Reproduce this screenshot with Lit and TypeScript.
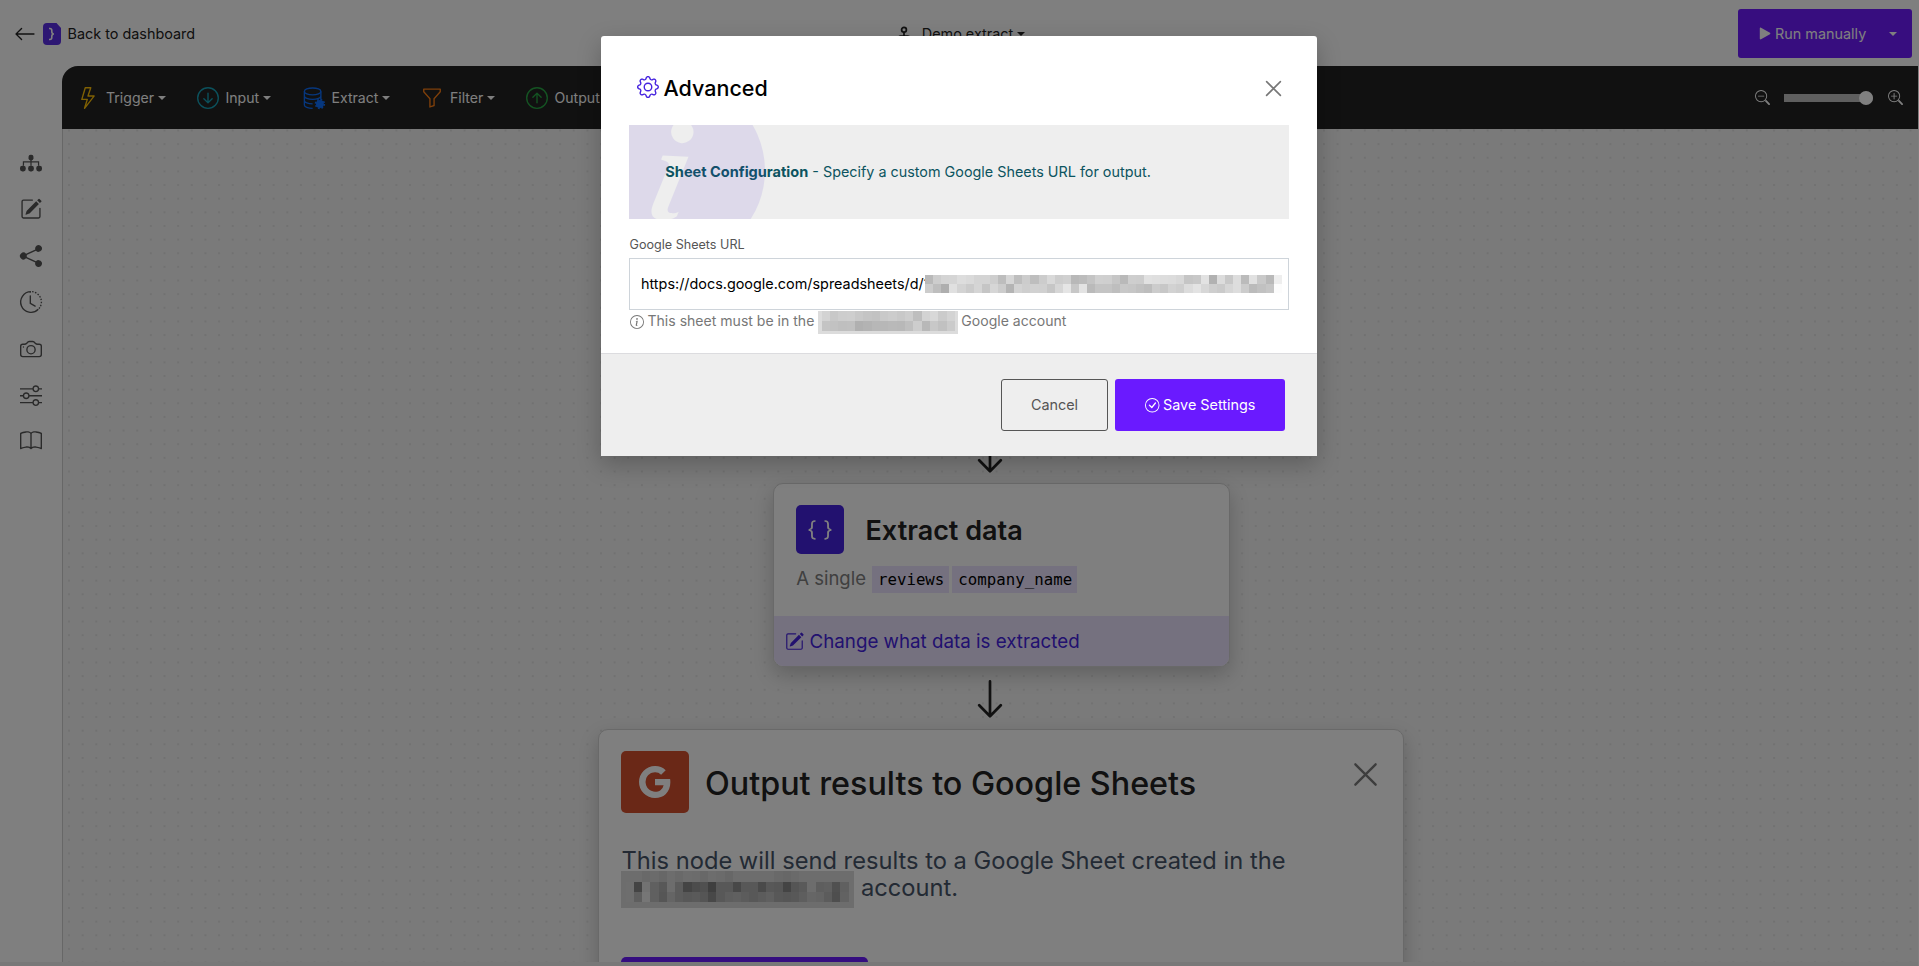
import { LitElement, html, css, svg } from "lit";
import { customElement, property } from "lit/decorators.js";

const PENCIL = svg`<path d="M15.502 1.94a.5.5 0 0 1 0 .706L14.459 3.69l-2-2L13.502.646a.5.5 0 0 1 .707 0l1.293 1.293zm-1.75 2.456-2-2L4.939 9.21a.5.5 0 0 0-.121.196l-.805 2.414a.25.25 0 0 0 .316.316l2.414-.805a.5.5 0 0 0 .196-.12l6.813-6.814z"/><path fill-rule="evenodd" d="M1 13.5A1.5 1.5 0 0 0 2.5 15h11a1.5 1.5 0 0 0 1.5-1.5v-6a.5.5 0 0 0-1 0v6a.5.5 0 0 1-.5.5h-11a.5.5 0 0 1-.5-.5v-11a.5.5 0 0 1 .5-.5H9a.5.5 0 0 0 0-1H2.5A1.5 1.5 0 0 0 1 2.5z"/>`;
const RING = svg`<path d="M8 15A7 7 0 1 1 8 1a7 7 0 0 1 0 14m0 1A8 8 0 1 0 8 0a8 8 0 0 0 0 16"/>`;
const LENS = svg`<path fill-rule="evenodd" d="M6.5 12a5.5 5.5 0 1 0 0-11 5.5 5.5 0 0 0 0 11M13 6.5a6.5 6.5 0 1 1-13 0 6.5 6.5 0 0 1 13 0"/><path d="M10.344 11.742q.044.06.098.115l3.85 3.85a1 1 0 0 0 1.415-1.414l-3.85-3.85a1 1 0 0 0-.115-.1 6.5 6.5 0 0 1-1.398 1.4z"/>`;
const INFO_STEM = "M8.93 6.588l-2.29.287-.082.38.45.083c.294.07.352.176.288.469l-.738 3.468c-.194.897.105 1.319.808 1.319.545 0 1.178-.252 1.465-.598l.088-.416c-.2.176-.492.246-.686.246-.275 0-.375-.193-.304-.533z";

const ICONS: Record<string, unknown> = {
  back: svg`<path fill-rule="evenodd" d="M15 8a.5.5 0 0 0-.5-.5H2.707l3.147-3.146a.5.5 0 1 0-.708-.708l-4 4a.5.5 0 0 0 0 .708l4 4a.5.5 0 0 0 .708-.708L2.707 8.5H14.5A.5.5 0 0 0 15 8"/>`,
  close: svg`<path d="M1.5 1.5 14.5 14.5M14.5 1.5 1.5 14.5" fill="none" stroke="currentColor" stroke-width="1.5" stroke-linecap="round"/>`,
  tree: svg`<path d="M8 5V10M2.5 10V7.2h11V10" fill="none" stroke="currentColor" stroke-width=".9"/><rect x="6.2" y="2" width="3.6" height="4.1" rx="1.5"/><rect x="0" y="10" width="4.2" height="4.1" rx="1.7"/><rect x="5.9" y="10" width="4.2" height="4.1" rx="1.7"/><rect x="11.8" y="10" width="4.2" height="4.1" rx="1.7"/>`,
  pencil: PENCIL,
  share: svg`<path d="M11 2.5a2.5 2.5 0 1 1 .603 1.628l-6.718 3.12a2.5 2.5 0 0 1 0 1.504l6.718 3.12a2.5 2.5 0 1 1-.488.876l-6.718-3.12a2.5 2.5 0 1 1 0-3.256l6.718-3.12A2.5 2.5 0 0 1 11 2.5"/>`,
  clock: svg`<path d="M8 .5A7.5 7.5 0 1 0 13.3 13.3" fill="none" stroke="currentColor"/><path d="M8.8.5A7.5 7.5 0 0 1 13.8 12.8" fill="none" stroke="currentColor" stroke-dasharray="1.1 1.05"/><path d="M7.5 3.5V9l3.5 2" fill="none" stroke="currentColor" stroke-linecap="round"/>`,
  camera: svg`<path d="M15 12a1 1 0 0 1-1 1H2a1 1 0 0 1-1-1V6a1 1 0 0 1 1-1h1.172a3 3 0 0 0 2.12-.879l.83-.828A1 1 0 0 1 6.827 3h2.344a1 1 0 0 1 .707.293l.828.828A3 3 0 0 0 12.828 5H14a1 1 0 0 1 1 1zM2 4a2 2 0 0 0-2 2v6a2 2 0 0 0 2 2h12a2 2 0 0 0 2-2V6a2 2 0 0 0-2-2h-1.172a2 2 0 0 1-1.414-.586l-.828-.828A2 2 0 0 0 9.172 2H6.828a2 2 0 0 0-1.414.586l-.828.828A2 2 0 0 1 3.172 4z"/><path d="M8 11a2.5 2.5 0 1 1 0-5 2.5 2.5 0 0 1 0 5m0 1a3.5 3.5 0 1 0 0-7 3.5 3.5 0 0 0 0 7M3 6.5a.5.5 0 1 1-1 0 .5.5 0 0 1 1 0"/>`,
  sliders: svg`<path fill-rule="evenodd" d="M11.5 2a1.5 1.5 0 1 0 0 3 1.5 1.5 0 0 0 0-3M9.05 3a2.5 2.5 0 0 1 4.9 0H16v1h-2.05a2.5 2.5 0 0 1-4.9 0H0V3zM4.5 7a1.5 1.5 0 1 0 0 3 1.5 1.5 0 0 0 0-3M2.05 8a2.5 2.5 0 0 1 4.9 0H16v1H6.95a2.5 2.5 0 0 1-4.9 0H0V8zm9.45 4a1.5 1.5 0 1 0 0 3 1.5 1.5 0 0 0 0-3m-2.45 1a2.5 2.5 0 0 1 4.9 0H16v1h-2.05a2.5 2.5 0 0 1-4.9 0H0v-1z"/>`,
  book: svg`<path d="M1 2.828c.885-.37 2.154-.769 3.388-.893 1.33-.134 2.458.063 3.112.752v9.746c-.935-.53-2.12-.603-3.213-.493-1.18.12-2.37.461-3.287.811zm7.5-.141c.654-.689 1.782-.886 3.112-.752 1.234.124 2.503.523 3.388.893v9.923c-.918-.35-2.107-.692-3.287-.81-1.094-.111-2.278-.039-3.213.492zM8 1.783C7.015.936 5.587.81 4.287.94c-1.514.153-3.042.672-3.994 1.105A.5.5 0 0 0 0 2.5v11a.5.5 0 0 0 .707.455c.882-.4 2.303-.881 3.68-1.02 1.409-.142 2.59.087 3.223.877a.5.5 0 0 0 .78 0c.633-.79 1.814-1.019 3.222-.877 1.378.139 2.8.62 3.681 1.02A.5.5 0 0 0 16 13.5v-11a.5.5 0 0 0-.293-.455c-.952-.433-2.48-.952-3.994-1.105C10.413.809 8.985.936 8 1.783"/>`,
  bolt: svg`<path d="M5.52.359A.5.5 0 0 1 6 0h4a.5.5 0 0 1 .474.658L8.694 6H12.5a.5.5 0 0 1 .395.807l-7 9a.5.5 0 0 1-.873-.454L6.823 9.5H3.5a.5.5 0 0 1-.48-.641zM6.374 1 4.168 8.5H7.5a.5.5 0 0 1 .478.647L6.78 13.04 11.478 7H8a.5.5 0 0 1-.474-.658L9.306 1z"/>`,
  down: svg`${RING}<path d="M8.5 4.5a.5.5 0 0 0-1 0v5.793L5.354 8.146a.5.5 0 1 0-.708.708l3 3a.5.5 0 0 0 .708 0l3-3a.5.5 0 0 0-.708-.708L8.5 10.293z"/>`,
  up: svg`${RING}<path d="M8.5 11.5a.5.5 0 0 1-1 0V5.707L5.354 7.854a.5.5 0 1 1-.708-.708l3-3a.5.5 0 0 1 .708 0l3 3a.5.5 0 0 1-.708.708L8.5 5.707z"/>`,
  database: svg`<g fill="none" stroke="currentColor"><ellipse cx="7" cy="3.2" rx="6" ry="2.5"/><path d="M1 3.2V13c0 1.4 2.7 2.5 6 2.5M13 3.2V9M1 6.5C1 7.9 3.7 9 7 9s6-1.1 6-2.5M1 9.8c0 1.4 2.7 2.5 6 2.5"/></g><circle cx="12.3" cy="12.3" r="2.9"/><circle cx="12.3" cy="12.3" r="3.2" fill="none" stroke="currentColor" stroke-width="1.2" stroke-dasharray="1.3 1.21"/>`,
  funnel: svg`<path d="M1.5 1.5A.5.5 0 0 1 2 1h12a.5.5 0 0 1 .5.5v2a.5.5 0 0 1-.128.334L10 8.692V13.5a.5.5 0 0 1-.342.474l-3 1A.5.5 0 0 1 6 14.5V8.692L1.628 3.834A.5.5 0 0 1 1.5 3.5zm1 .5v1.308l4.372 4.858A.5.5 0 0 1 7 8.5v5.306l2-.666V8.5a.5.5 0 0 1 .128-.334L13.5 3.308V2z"/>`,
  zoomOut: svg`${LENS}<path fill-rule="evenodd" d="M3 6.5a.5.5 0 0 1 .5-.5h6a.5.5 0 0 1 0 1h-6a.5.5 0 0 1-.5-.5"/>`,
  zoomIn: svg`${LENS}<path fill-rule="evenodd" d="M6.5 3a.5.5 0 0 1 .5.5V6h2.5a.5.5 0 0 1 0 1H7v2.5a.5.5 0 0 1-1 0V7H3.500a.5.5 0 0 1 0-1H6V3.500a.5.5 0 0 1 .5-.5"/>`,
  play: svg`<path d="M2.200 1.600v12.800c0 .8.800 1.200 1.500.8l11-6.400c.7-.4.700-1.200 0-1.600l-11-6.400c-.7-.4-1.500 0-1.500.8"/>`,
  braces: svg`<path d="M2.114 8.063V7.900c1.005-.102 1.497-.615 1.497-1.600V4.503c0-1.094.39-1.538 1.354-1.538h.273V2h-.376C3.250 2 2.490 2.759 2.490 4.352v1.524c0 1.094-.376 1.456-1.490 1.456v1.299c1.114 0 1.490.362 1.490 1.456v1.524c0 1.593.759 2.352 2.372 2.352h.376v-.964h-.273c-.964 0-1.354-.444-1.354-1.538V9.663c0-.984-.492-1.497-1.497-1.600M13.886 7.900v.163c-1.005.103-1.497.616-1.497 1.600v1.798c0 1.094-.39 1.538-1.354 1.538h-.273v.964h.376c1.613 0 2.372-.759 2.372-2.352v-1.524c0-1.094.376-1.456 1.490-1.456V7.332c-1.114 0-1.490-.362-1.490-1.456V4.352C13.510 2.759 12.750 2 11.138 2h-.376v.964h.273c.964 0 1.354.444 1.354 1.538V6.300c0 .984.492 1.497 1.497 1.600"/>`,
  google: svg`<path d="M15.545 6.558a9.400 9.400 0 0 1 .139 1.626c0 2.434-.87 4.492-2.384 5.885h.002C11.978 15.292 10.158 16 8 16A8 8 0 1 1 8 0a7.700 7.700 0 0 1 5.352 2.082l-2.284 2.284A4.350 4.350 0 0 0 8 3.166c-2.087 0-3.860 1.408-4.492 3.304a4.800 4.800 0 0 0 0 3.063h.003c.635 1.893 2.405 3.301 4.492 3.301 1.078 0 2.004-.276 2.722-.764h-.003a3.700 3.700 0 0 0 1.599-2.431H8v-3.080z"/>`,
  gear: svg`<path d="M8 4.754a3.246 3.246 0 1 0 0 6.492 3.246 3.246 0 0 0 0-6.492M5.754 8a2.246 2.246 0 1 1 4.492 0 2.246 2.246 0 0 1-4.492 0"/><path d="M9.796 1.343c-.527-1.790-3.065-1.790-3.592 0l-.094.319a.873.873 0 0 1-1.255.520l-.292-.160c-1.640-.892-3.433.902-2.540 2.541l.159.292a.873.873 0 0 1-.520 1.255l-.319.094c-1.790.527-1.790 3.065 0 3.592l.319.094a.873.873 0 0 1 .520 1.255l-.160.292c-.892 1.640.901 3.434 2.541 2.540l.292-.159a.873.873 0 0 1 1.255.520l.094.319c.527 1.790 3.065 1.790 3.592 0l.094-.319a.873.873 0 0 1 1.255-.520l.292.160c1.640.893 3.434-.902 2.540-2.541l-.159-.292a.873.873 0 0 1 .520-1.255l.319-.094c1.790-.527 1.790-3.065 0-3.592l-.319-.094a.873.873 0 0 1-.520-1.255l.160-.292c.893-1.640-.902-3.433-2.541-2.540l-.292.159a.873.873 0 0 1-1.255-.520zm-2.633.283c.246-.835 1.428-.835 1.674 0l.094.319a1.873 1.873 0 0 0 2.693 1.115l.291-.160c.764-.415 1.600.420 1.184 1.185l-.159.292a1.873 1.873 0 0 0 1.116 2.692l.318.094c.835.246.835 1.428 0 1.674l-.319.094a1.873 1.873 0 0 0-1.115 2.693l.160.291c.415.764-.420 1.600-1.185 1.184l-.291-.159a1.873 1.873 0 0 0-2.693 1.116l-.094.318c-.246.835-1.428.835-1.674 0l-.094-.319a1.873 1.873 0 0 0-2.692-1.115l-.292.160c-.764.415-1.600-.420-1.184-1.185l.159-.291A1.873 1.873 0 0 0 1.945 8.930l-.319-.094c-.835-.246-.835-1.428 0-1.674l.319-.094A1.873 1.873 0 0 0 3.060 4.377l-.160-.292c-.415-.764.420-1.600 1.185-1.184l.292.159a1.873 1.873 0 0 0 2.692-1.115z"/>`,
  info: svg`${RING}<path d="${INFO_STEM}"/><circle cx="8" cy="4.5" r="1"/>`,
  infoFill: svg`<path fill-rule="evenodd" d="M8 16A8 8 0 1 0 8 0a8 8 0 0 0 0 16${INFO_STEM}M8 5.5a1 1 0 1 1 0-2 1 1 0 0 1 0 2"/>`,
  check: svg`${RING}<path d="m10.970 4.970-.020.022-3.473 4.425-2.093-2.094a.75.75 0 0 0-1.060 1.060L6.970 11.030a.75.75 0 0 0 1.079-.020l3.992-4.990a.75.75 0 0 0-1.071-1.050"/>`,
  stamp: svg`<g fill="none" stroke="currentColor" stroke-width="2.300"><circle cx="8" cy="3" r="3.200"/><path d="M8 6v5M.9 15v-1.500a2 2 0 0 1 2-2h10.200a2 2 0 0 1 2 2V15"/></g>`,
};

@customElement("ui-icon")
class UiIcon extends LitElement {
  @property() name = "";
  static styles = css`
    :host { display: block; flex: none; width: 16px; height: 16px; }
    .glyph { display: block; width: 100%; height: 100%; fill: currentColor; overflow: visible; }
  `;
  render() {
    return html`<svg class="glyph" viewBox="0 0 16 16">${ICONS[this.name]}</svg>`;
  }
}

/* Redacted text: a grid of grey cells, one row per string, two hex digits per cell. */
@customElement("redacted-text")
class RedactedText extends LitElement {
  @property({ attribute: false }) rows: string[] = [];
  static styles = css`
    :host { display: flex; flex-direction: column; }
    .row { display: flex; flex: 1; }
    .cell { flex: 1; }
  `;
  render() {
    return this.rows.map((r) => html`<div class="row">${r.split(" ").map((v) => html`<div class="cell" style="background:#${v}${v}${v}"></div>`)}</div>`);
  }
}

const URL_CELLS = [
  "b9 cd d4 d5 dd da d4 d4 ce bd d6 be cc be cc d9 cd d0 b8 bc c4 d0 cf c6 b9 ce cd e1 df dd dc d8 c5 c8 e2 b1 dc c8 dd bb e1 c9 b9 ee",
  "cc be ae e0 d3 cb d5 c5 d6 cc b4 d3 ce d1 d0 c6 d6 e5 c7 e3 ba c4 c4 be c8 c6 c1 bd cc c7 d2 ce dc e3 d7 ce ca d6 dd cc bb c1 c6 fc",
];
const SHEET_ACCOUNT = [
  "d3 c8 cd ce c8 c4 c2 c9 cc c8 cd be d3 d8 cb d3",
  "c4 c2 bf c0 b0 b3 b7 b7 b9 b8 bf cd b8 c8 c1 cb",
];
const NODE_ACCOUNT = [
  "da da d2 d6 ce da d2 da d8 d0 da d6 ce da da da da da d2 ce d4 da da da da da da",
  "dc 88 e4 c0 b0 da b8 88 98 a0 7e b0 b0 90 b0 b0 94 b0 ac 88 aa b4 da bc c0 a0 c0",
  "dc bc ec c0 ac ca b8 b0 b4 aa 90 b0 bc c0 b8 b0 b8 c0 b0 ac b0 bc cc c8 b8 9c c4",
];

const MENU = [
  { icon: "bolt", label: "Trigger", tone: "yellow" },
  { icon: "down", label: "Input", tone: "teal" },
  { icon: "database", label: "Extract", tone: "blue" },
  { icon: "funnel", label: "Filter", tone: "orange" },
  { icon: "up", label: "Output", tone: "green" },
];
const SIDE = ["tree", "pencil", "share", "clock", "camera", "sliders", "book"];

@customElement("app-root")
class AppRoot extends LitElement {
  static styles = css`
    :host { display: block; position: relative; width: 100%; height: 966px; overflow: hidden; background: #fff; color: #222; font: 14.4px/20px Inter, "Noto Sans", sans-serif; }
    * { box-sizing: border-box; }
    .app { display: grid; grid-template: 66px 896px 4px / 62px 1fr; height: 966px; padding-right: 1px; }
    .top { grid-column: 1 / 3; display: grid; grid-template-columns: 1fr auto 1fr; align-items: center; padding: 0 6px 0 15px; height: 67px; }
    .home { display: flex; align-items: center; }
    .home ui-icon { width: 22px; height: 22px; margin-left: -1px; }
    .logo { width: 18px; height: 22px; margin: 0 6.500px 0 7px; }
    .project { display: flex; align-items: center; margin-right: 4px; }
    .project ui-icon { width: 12px; height: 15px; margin: 0 12px 0 0; }
    .caret { border: 4px solid transparent; border-top-color: currentColor; border-bottom: 0; margin-left: 4px; }
    .run { justify-self: end; display: flex; align-items: center; width: 174px; height: 49px; padding-left: 20px; background: #6e1aff; color: #fff; border-radius: 3px; }
    .run ui-icon { width: 13px; height: 13px; margin-right: 4px; }
    .run .caret { margin-left: 23px; }

    .side { display: flex; flex-direction: column; align-items: center; gap: 24.400px; padding-top: 86px; color: #555; }
    .side ui-icon { width: 22px; height: 22px; }
    .stage { display: flex; flex-direction: column; min-width: 0; overflow: hidden; }
    .tools { flex: none; display: flex; align-items: center; height: 63px; padding: 0 15px 0 15px; background: #222; border-radius: 16px 0 0 0; color: #fff; }
    .menu { display: grid; grid-template-columns: 119.500px 106px 118.500px 104.500px 110px; flex: 1; }
    .menu-item { display: flex; align-items: center; font-size: 14.100px; }
    .menu-item ui-icon { width: 22px; height: 22px; margin-right: 7px; }
    .yellow { color: #ffc107; } .teal { color: #17a2b8; } .blue { color: #0d6efd; } .orange { color: #fd7e14; } .green { color: #28a745; }
    .zoom { display: flex; align-items: center; }
    .zoom ui-icon { width: 15px; height: 15px; }
    .slider { display: flex; justify-content: flex-end; align-items: center; width: 89px; height: 8px; margin: 0 15px 0 14px; background: #bfbfbf; border-radius: 0 4px 4px 0; }
    .knob { width: 14px; height: 14px; border-radius: 50%; background: #fff; }

    .canvas { flex: 1; min-height: 0; display: flex; flex-direction: column; align-items: center; padding-top: 306px; border-left: 1px solid #cfcfcf; overflow: hidden;
      background: radial-gradient(circle at center, #dcdcdc .5px, transparent 1.100px) -.8px 8.300px / 13.645px 13.645px #f4f4f4; }
    .arrow { flex: none; width: 26px; height: 38px; margin-right: 1px; color: #222; }
    .card { flex: none; background: #fff; border: 1px solid #d2d2d2; border-radius: 10px; box-shadow: 0 8px 20px rgba(0, 0, 0, .2); overflow: hidden; }
    .extract { display: flex; flex-direction: column; width: 457px; height: 184px; margin: 10px 0 13px 21px; }
    .extract-head { display: flex; align-items: center; gap: 22px; padding: 21px 0 0 22px; }
    .tile { display: flex; align-items: center; justify-content: center; border-radius: 5px; color: #fff; }
    .tile-extract { width: 48px; height: 49px; background: #4522df; }
    .tile-extract ui-icon { width: 26px; height: 26px; }
    .extract-title { font-size: 27px; font-weight: 600; line-height: 34px; padding-top: 2px; }
    .fields { display: flex; align-items: center; padding: 12px 0 0 22.700px; height: 39px; font-size: 18.500px; color: #808080; }
    .fields-lead { margin-right: 6px; padding-bottom: 3px; }
    .field { height: 27px; margin-right: 3px; padding: 0 5px 0 6px; background: #eae2ff; color: #000; font: 15.750px/27px "DejaVu Sans Mono", monospace; }
    .change { display: flex; align-items: center; margin-top: auto; height: 50px; padding-left: 11.500px; background: #eae2ff; color: #4522df; font-size: 18.750px; }
    .change ui-icon { width: 19px; height: 19px; margin-right: 5.500px; }
    .change span { padding-top: 1px; }
    .output { width: 806px; height: 300px; margin: 11px 0 0 20px; padding: 21px 22px 0; }
    .output-head { display: flex; align-items: flex-start; }
    .tile-output { width: 68px; height: 62px; background: #d5502e; }
    .tile-output ui-icon { width: 32px; height: 32px; }
    .output-title { margin: 12px auto 0 16.500px; font-size: 32.300px; font-weight: 500; line-height: 42px; }
    .output-head .x { width: 25px; height: 25px; margin: 11px 3px 0 0; color: #7a7a7a; }
    .output-text { margin-top: 34px; padding-left: 1px; font-size: 23.700px; line-height: 27.300px; color: #475569; }
    .line { display: flex; white-space: pre; }
    .node-account { width: 233px; height: 37px; margin: -3px 7.500px 0 -1px; padding: 0 5px 6px; background: #dadada; }
    .action { width: 247px; height: 40px; margin-top: 49px; border-radius: 5px; background: #6a1aff; }
    .edge { grid-column: 1 / 3; background: #f0f0f0; }

    .backdrop { position: absolute; inset: 0; background: rgba(0, 0, 0, .5); }
    .modal { position: absolute; left: 601px; top: 36px; width: 716px; height: 420px; display: flex; flex-direction: column; background: #fff; border-radius: 3px 3px 0 0; box-shadow: 0 8px 24px rgba(0, 0, 0, .24); color: #000; }
    .modal-head { display: flex; align-items: center; height: 89px; padding: 15px 35px 0 35.500px; }
    .modal-head .gear { width: 22px; height: 22px; color: #4522df; margin-right: 5px; margin-top: -2px; }
    .modal-title { flex: 1; font-size: 21.500px; font-weight: 500; line-height: 28px; }
    .modal-head .x { width: 17px; height: 17px; color: #777; }
    .notice { position: relative; overflow: hidden; display: flex; align-items: center; height: 94px; margin: 0 28px; padding-left: 36.300px; background: #eee; color: #0c5460; font-size: 14.360px; white-space: pre; }
    .notice b { font-size: 14.550px; }
    .notice-mark { position: absolute; left: -43.500px; top: -44px; width: 179px; height: 179px; color: #4e30d0; opacity: .1; transform: rotate(10deg); }
    .form { flex: 1; padding: 16px 28px 0; }
    .label { font-size: 12.600px; line-height: 20px; padding-left: .5px; color: #555; }
    .input { display: flex; align-items: center; height: 52px; margin-top: 3px; padding-left: 11px; border: 1px solid #ced4da; }
    .url { flex: none; white-space: nowrap; }
    .url-cells { flex: none; width: 357px; height: 18px; margin-left: -4.600px; position: relative; }
    .help { display: flex; align-items: center; height: 23px; margin-top: 1px; font-size: 14.050px; color: #777; }
    .help ui-icon { width: 14px; height: 14px; margin: -2px 4px 0 .5px; }
    .help-text { padding-bottom: 3px; }
    .sheet-account { width: 140px; height: 23px; margin: 0 3.500px; padding: 0 3px 3px 4px; background: #dcdcdc; }
    .modal-foot { display: flex; justify-content: flex-end; gap: 7px; height: 103px; padding: 25px 32px 0; background: #eee; border-top: 1px solid #dcdcdf; }
    .btn { display: flex; align-items: center; justify-content: center; height: 52px; border-radius: 3px; }
    .cancel { width: 107px; border: 1px solid #555; color: #555; }
    .save { width: 170px; background: #6a1aff; color: #fff; }
    .save ui-icon { width: 14.500px; height: 14.500px; margin-right: 4px; }
  `;

  arrow() {
    return html`<svg class="arrow" viewBox="0 0 26 38"><path d="M13 1.400V36M2.200 25.300 13 36.200 23.800 25.300" fill="none" stroke="currentColor" stroke-width="2.700" stroke-linecap="round" stroke-linejoin="round"/></svg>`;
  }

  render() {
    return html`
      <div class="app">
        <header class="top">
          <div class="home">
            <ui-icon name="back"></ui-icon>
            <svg class="logo" viewBox="0 0 18 22"><path d="M4 0h9.500L18 5v13a4 4 0 0 1-4 4H4a4 4 0 0 1-4-4V4a4 4 0 0 1 4-4" fill="#5b2ee6"/><path d="M6 5.500h.8c1.500 0 2 .8 2 2v1.300c0 1.200.5 2 2 2.200-1.500.2-2 1-2 2.200v1.300c0 1.200-.5 2-2 2H6" fill="none" stroke="#fff" stroke-width="1.600"/></svg>
            <span>Back to dashboard</span>
          </div>
          <div class="project"><ui-icon name="stamp"></ui-icon><span>Demo extract</span><i class="caret"></i></div>
          <div class="run"><ui-icon name="play"></ui-icon><span>Run manually</span><i class="caret"></i></div>
        </header>
        <nav class="side">${SIDE.map((n) => html`<ui-icon name=${n}></ui-icon>`)}</nav>
        <main class="stage">
          <div class="tools">
            <div class="menu">
              ${MENU.map((m) => html`<div class="menu-item"><ui-icon class=${m.tone} name=${m.icon}></ui-icon><span>${m.label}</span><i class="caret"></i></div>`)}
            </div>
            <div class="zoom"><ui-icon name="zoomOut"></ui-icon><div class="slider"><div class="knob"></div></div><ui-icon name="zoomIn"></ui-icon></div>
          </div>
          <div class="canvas">
            ${this.arrow()}
            <section class="card extract">
              <div class="extract-head"><div class="tile tile-extract"><ui-icon name="braces"></ui-icon></div><div class="extract-title">Extract data</div></div>
              <div class="fields"><span class="fields-lead">A single</span><span class="field">reviews</span><span class="field">company_name</span></div>
              <div class="change"><ui-icon name="pencil"></ui-icon><span>Change what data is extracted</span></div>
            </section>
            ${this.arrow()}
            <section class="card output">
              <div class="output-head">
                <div class="tile tile-output"><ui-icon name="google"></ui-icon></div>
                <div class="output-title">Output results to Google Sheets</div>
                <ui-icon class="x" name="close"></ui-icon>
              </div>
              <div class="output-text">
                <div class="line">This node will send results to a Google Sheet created in the</div>
                <div class="line"><redacted-text class="node-account" .rows=${NODE_ACCOUNT}></redacted-text>account.</div>
              </div>
              <div class="action"></div>
            </section>
          </div>
        </main>
        <div class="edge"></div>
      </div>
      <div class="backdrop"></div>
      <div class="modal">
        <div class="modal-head"><ui-icon class="gear" name="gear"></ui-icon><div class="modal-title">Advanced</div><ui-icon class="x" name="close"></ui-icon></div>
        <div class="notice"><b>Sheet Configuration</b> - Specify a custom Google Sheets URL for output.<ui-icon class="notice-mark" name="infoFill"></ui-icon></div>
        <div class="form">
          <div class="label">Google Sheets URL</div>
          <div class="input"><span class="url">https://docs.google.com/spreadsheets/d/1</span><redacted-text class="url-cells" .rows=${URL_CELLS}></redacted-text></div>
          <div class="help"><ui-icon name="info"></ui-icon><span class="help-text">This sheet must be in the</span><redacted-text class="sheet-account" .rows=${SHEET_ACCOUNT}></redacted-text><span class="help-text">Google account</span></div>
        </div>
        <div class="modal-foot">
          <div class="btn cancel">Cancel</div>
          <div class="btn save"><ui-icon name="check"></ui-icon>Save Settings</div>
        </div>
      </div>
    `;
  }
}
